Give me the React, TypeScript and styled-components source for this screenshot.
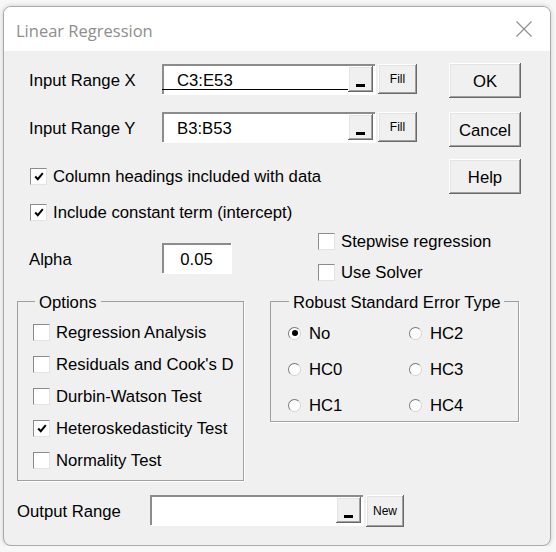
import React from 'react';
import styled, { createGlobalStyle, css } from 'styled-components';

const GlobalStyle = createGlobalStyle`
  body {
    margin: 0;
    background: #f7f7f7;
    font-family: 'Liberation Sans', Arial, sans-serif;
  }
`;

const raised = css`
  background: #f0f0f0;
  box-shadow: inset -1px -1px #696969, inset 1px 1px #ffffff,
    inset -2px -2px #a0a0a0, inset 2px 2px #e3e3e3;
`;

const sunken = css`
  background: #ffffff;
  box-shadow: inset 2px 2px #8c8c8c, 1px 1px #ffffff;
`;

const Page = styled.div`
  padding: 6px 0 0 3px;
`;

const Window = styled.div`
  box-sizing: border-box;
  width: 548px;
  height: 540px;
  border: 1px solid #a9a9a9;
  border-radius: 8px;
  overflow: hidden;
  background: #f0f0f0;
  box-shadow: 0 0 5px rgba(0, 0, 0, 0.18);
  display: flex;
  flex-direction: column;
`;

const TitleBar = styled.div`
  flex: none;
  height: 44px;
  background: #ffffff;
  display: flex;
  align-items: center;
  justify-content: space-between;
  padding: 0 18px 0 12px;
`;

const Title = styled.div`
  font-family: 'Open Sans', 'Noto Sans', sans-serif;
  font-size: 16.5px;
  color: #8e8e8e;
  padding-top: 2px;
`;

const Body = styled.div`
  padding: 12px 0 0 13px;
  font-size: 16.7px;
  color: #000;
`;

const TopSection = styled.div`
  display: flex;
`;

const LeftPane = styled.div`
  width: 432px;
  padding-top: 1px;
`;

const FieldRow = styled.div<{ $top?: number; $indent?: number }>`
  display: flex;
  align-items: flex-start;
  margin-top: ${(p) => p.$top ?? 0}px;
  padding-left: ${(p) => p.$indent ?? 12}px;
`;

const Label = styled.div`
  box-sizing: border-box;
  width: 133px;
  height: 30px;
  padding-top: 4px;
  line-height: 26px;
  flex: none;
`;

const RangeBox = styled.div`
  ${sunken}
  box-sizing: border-box;
  width: 213px;
  height: 30px;
  display: flex;
  align-items: flex-start;
  padding: 2px 2px 0 0;
`;

const RangeText = styled.div<{ $focused?: boolean }>`
  flex: 1;
  box-sizing: border-box;
  height: 24px;
  padding: 7px 0 0 15px;
  line-height: 16px;
  border-bottom: 1px solid ${(p) => (p.$focused ? '#000' : 'transparent')};
`;

const PickButton = styled.div`
  ${raised}
  width: 25px;
  height: 26px;
  display: flex;
  justify-content: center;
  align-items: flex-end;
`;

const Underscore = styled.span`
  width: 9px;
  height: 3px;
  margin-bottom: 5px;
  background: #000;
`;

const SmallButton = styled.div<{ $w: number; $h: number }>`
  ${raised}
  width: ${(p) => p.$w}px;
  height: ${(p) => p.$h}px;
  margin-left: 3px;
  display: flex;
  align-items: center;
  justify-content: center;
  font-size: 12px;
`;

const CheckRow = styled.div<{ $top?: number; $indent?: number }>`
  display: flex;
  align-items: center;
  gap: 6px;
  height: 18px;
  margin-top: ${(p) => p.$top ?? 0}px;
  padding-left: ${(p) => p.$indent ?? 0}px;
  white-space: nowrap;
`;

const CheckText = styled.span`
  padding-top: 2px;
`;

const CheckBox = styled.div`
  box-sizing: border-box;
  width: 17px;
  height: 17px;
  flex: none;
  background: #fff;
  border: 1px solid;
  border-color: #8c8c8c #e3e3e3 #e3e3e3 #8c8c8c;
  display: flex;
  align-items: center;
  justify-content: center;
`;

const AlphaRow = styled.div`
  display: flex;
  margin-top: 11px;
`;

const AlphaInput = styled.div`
  ${sunken}
  box-sizing: border-box;
  width: 69px;
  height: 30px;
  padding-top: 4px;
  line-height: 26px;
  text-align: center;
`;

const SideChecks = styled.div`
  display: flex;
  flex-direction: column;
  gap: 13px;
  margin-left: 87px;
`;

const ButtonColumn = styled.div`
  display: flex;
  flex-direction: column;
`;

const DialogButton = styled.div<{ $top: number }>`
  ${raised}
  box-sizing: border-box;
  width: 72px;
  height: 35px;
  padding-top: 2px;
  margin-top: ${(p) => p.$top}px;
  display: flex;
  align-items: center;
  justify-content: center;
`;

const GroupsRow = styled.div`
  display: flex;
  align-items: flex-start;
  gap: 26px;
  margin-top: 10px;
`;

const GroupBox = styled.fieldset<{ $w: number; $h: number }>`
  box-sizing: border-box;
  width: ${(p) => p.$w}px;
  height: ${(p) => p.$h}px;
  margin: 0;
  padding: 0;
  border: 1px solid #a0a0a0;
  box-shadow: 1px 1px #ffffff;
  min-width: 0;
`;

const Legend = styled.legend<{ $left: number }>`
  margin-left: ${(p) => p.$left}px;
  padding: 3px 4px 0;
  line-height: 18px;
`;

const OptionList = styled.div`
  display: flex;
  flex-direction: column;
  gap: 14px;
  padding: 11px 0 0 15px;
`;

const RadioGrid = styled.div`
  display: grid;
  grid-template-columns: 121px 1fr;
  row-gap: 18px;
  padding: 12px 0 0 17px;
`;

const RadioRow = styled.div`
  display: flex;
  align-items: center;
  gap: 8px;
  height: 18px;
`;

const Radio = styled.div<{ $on?: boolean }>`
  box-sizing: border-box;
  width: 13px;
  height: 13px;
  border-radius: 50%;
  background: #fff;
  border: 1px solid;
  border-color: #7a7a7a #d4d4d4 #d4d4d4 #7a7a7a;
  display: flex;
  align-items: center;
  justify-content: center;

  &::after {
    content: '';
    display: ${(p) => (p.$on ? 'block' : 'none')};
    width: 6px;
    height: 6px;
    border-radius: 50%;
    background: #000;
  }
`;

const OutputRow = styled.div`
  display: flex;
  align-items: flex-start;
  margin-top: 14px;
`;

const Check = () => (
  <svg width="10" height="9" viewBox="0 0 10 9">
    <path d="M1.2 4.5 L3.8 7.2 L8.8 1.2" fill="none" stroke="#000" strokeWidth="2" />
  </svg>
);

const CloseIcon = () => (
  <svg width="16" height="16" viewBox="0 0 16 16">
    <path d="M0.5 0.5 L15.5 15.5 M15.5 0.5 L0.5 15.5" stroke="#8e8e8e" strokeWidth="1.1" />
  </svg>
);

const Checkbox = ({ label, checked, top, indent }: { label: string; checked?: boolean; top?: number; indent?: number }) => (
  <CheckRow $top={top} $indent={indent}>
    <CheckBox>{checked && <Check />}</CheckBox>
    <CheckText>{label}</CheckText>
  </CheckRow>
);

const RangeField = ({ value, focused }: { value: string; focused?: boolean }) => (
  <RangeBox>
    <RangeText $focused={focused}>{value}</RangeText>
    <PickButton>
      <Underscore />
    </PickButton>
  </RangeBox>
);

const OPTIONS = [
  { label: 'Regression Analysis', checked: false },
  { label: "Residuals and Cook's D", checked: false },
  { label: 'Durbin-Watson Test', checked: false },
  { label: 'Heteroskedasticity Test', checked: true },
  { label: 'Normality Test', checked: false },
];

const RADIOS = ['No', 'HC2', 'HC0', 'HC3', 'HC1', 'HC4'];

const App = () => (
  <Page>
    <GlobalStyle />
    <Window>
      <TitleBar>
        <Title>Linear Regression</Title>
        <CloseIcon />
      </TitleBar>
      <Body>
        <TopSection>
          <LeftPane>
            <FieldRow>
              <Label>Input Range X</Label>
              <RangeField value="C3:E53" focused />
              <SmallButton $w={39} $h={30}>Fill</SmallButton>
            </FieldRow>
            <FieldRow $top={18}>
              <Label>Input Range Y</Label>
              <RangeField value="B3:B53" />
              <SmallButton $w={39} $h={30}>Fill</SmallButton>
            </FieldRow>
            <Checkbox label="Column headings included with data" checked top={25} indent={13} />
            <Checkbox label="Include constant term (intercept)" checked top={18} indent={13} />
            <AlphaRow>
              <FieldRow $top={11}>
                <Label>Alpha</Label>
                <AlphaInput>0.05</AlphaInput>
              </FieldRow>
              <SideChecks>
                <Checkbox label="Stepwise regression" />
                <Checkbox label="Use Solver" />
              </SideChecks>
            </AlphaRow>
          </LeftPane>
          <ButtonColumn>
            <DialogButton $top={0}>OK</DialogButton>
            <DialogButton $top={14}>Cancel</DialogButton>
            <DialogButton $top={12}>Help</DialogButton>
          </ButtonColumn>
        </TopSection>
        <GroupsRow>
          <GroupBox $w={227} $h={190}>
            <Legend $left={17}>Options</Legend>
            <OptionList>
              {OPTIONS.map((o) => (
                <Checkbox key={o.label} label={o.label} checked={o.checked} />
              ))}
            </OptionList>
          </GroupBox>
          <GroupBox $w={249} $h={131}>
            <Legend $left={18}>Robust Standard Error Type</Legend>
            <RadioGrid>
              {RADIOS.map((r) => (
                <RadioRow key={r}>
                  <Radio $on={r === 'No'} />
                  <CheckText>{r}</CheckText>
                </RadioRow>
              ))}
            </RadioGrid>
          </GroupBox>
        </GroupsRow>
        <OutputRow>
          <Label>Output Range</Label>
          <RangeField value="" />
          <SmallButton $w={38} $h={32}>New</SmallButton>
        </OutputRow>
      </Body>
    </Window>
  </Page>
);

export default App;
